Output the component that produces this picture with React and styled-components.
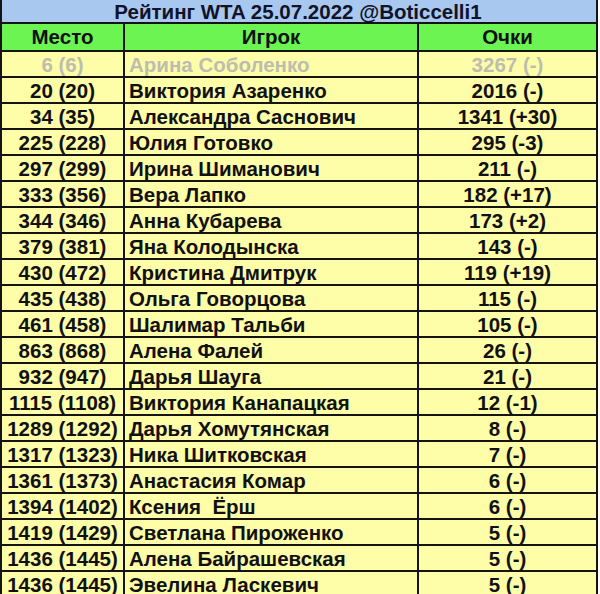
import React from "react";
import styled, { createGlobalStyle } from "styled-components";

const Global = createGlobalStyle`
  html, body { margin: 0; padding: 0; background: #ffffff; }
  body { font-family: "Liberation Sans", Arial, sans-serif; }
`;

const Table = styled.div`
  display: grid;
  grid-template-columns: 121px 292px 177px;
  column-gap: 2px;
  row-gap: 2px;
  width: 594px;
  background: #141414;
  border-left: 2px solid #141414;
  border-right: 2px solid #141414;
  border-bottom: 2px solid #141414;
`;

const Title = styled.div`
  grid-column: 1 / -1;
  height: 22px;
  background: #a9c8f0;
  color: #10132a;
  font-weight: 700;
  font-size: 20.5px;
  line-height: 23px;
  text-align: center;
  padding-right: 2px;
`;

const Head = styled.div`
  height: 26px;
  background: #6cf552;
  color: #111;
  font-weight: 700;
  font-size: 20.5px;
  line-height: 26px;
  text-align: center;
`;

const Cell = styled.div`
  height: 24px;
  background: #fefda8;
  color: ${(p) => (p.$dim ? "#bdbdb0" : "#111")};
  font-weight: 700;
  font-size: 20.5px;
  line-height: 25px;
  white-space: pre;
  text-align: ${(p) => (p.$left ? "left" : "center")};
  padding-left: ${(p) => (p.$left ? "4px" : "0")};
  overflow: hidden;
`;

const rows = [
  ["6 (6)", "Арина Соболенко", "3267 (-)", true],
  ["20 (20)", "Виктория Азаренко", "2016 (-)"],
  ["34 (35)", "Александра Саснович", "1341 (+30)"],
  ["225 (228)", "Юлия Готовко", "295 (-3)"],
  ["297 (299)", "Ирина Шиманович", "211 (-)"],
  ["333 (356)", "Вера Лапко", "182 (+17)"],
  ["344 (346)", "Анна Кубарева", "173 (+2)"],
  ["379 (381)", "Яна Колодынска", "143 (-)"],
  ["430 (472)", "Кристина Дмитрук", "119 (+19)"],
  ["435 (438)", "Ольга Говорцова", "115 (-)"],
  ["461 (458)", "Шалимар Тальби", "105 (-)"],
  ["863 (868)", "Алена Фалей", "26 (-)"],
  ["932 (947)", "Дарья Шауга", "21 (-)"],
  ["1115 (1108)", "Виктория Канапацкая", "12 (-1)"],
  ["1289 (1292)", "Дарья Хомутянская", "8 (-)"],
  ["1317 (1323)", "Ника Шитковская", "7 (-)"],
  ["1361 (1373)", "Анастасия Комар", "6 (-)"],
  ["1394 (1402)", "Ксения  Ёрш", "6 (-)"],
  ["1419 (1429)", "Светлана Пироженко", "5 (-)"],
  ["1436 (1445)", "Алена Байрашевская", "5 (-)"],
  ["1436 (1445)", "Эвелина Ласкевич", "5 (-)"],
];

export default function App() {
  return (
    <>
      <Global />
      <Table>
        <Title>Рейтинг WTA 25.07.2022 @Boticcelli1</Title>
        <Head>Место</Head>
        <Head>Игрок</Head>
        <Head>Очки</Head>
        {rows.map(([place, name, pts, dim], i) => (
          <React.Fragment key={i}>
            <Cell $dim={dim}>{place}</Cell>
            <Cell $dim={dim} $left>{name}</Cell>
            <Cell $dim={dim}>{pts}</Cell>
          </React.Fragment>
        ))}
      </Table>
    </>
  );
}
